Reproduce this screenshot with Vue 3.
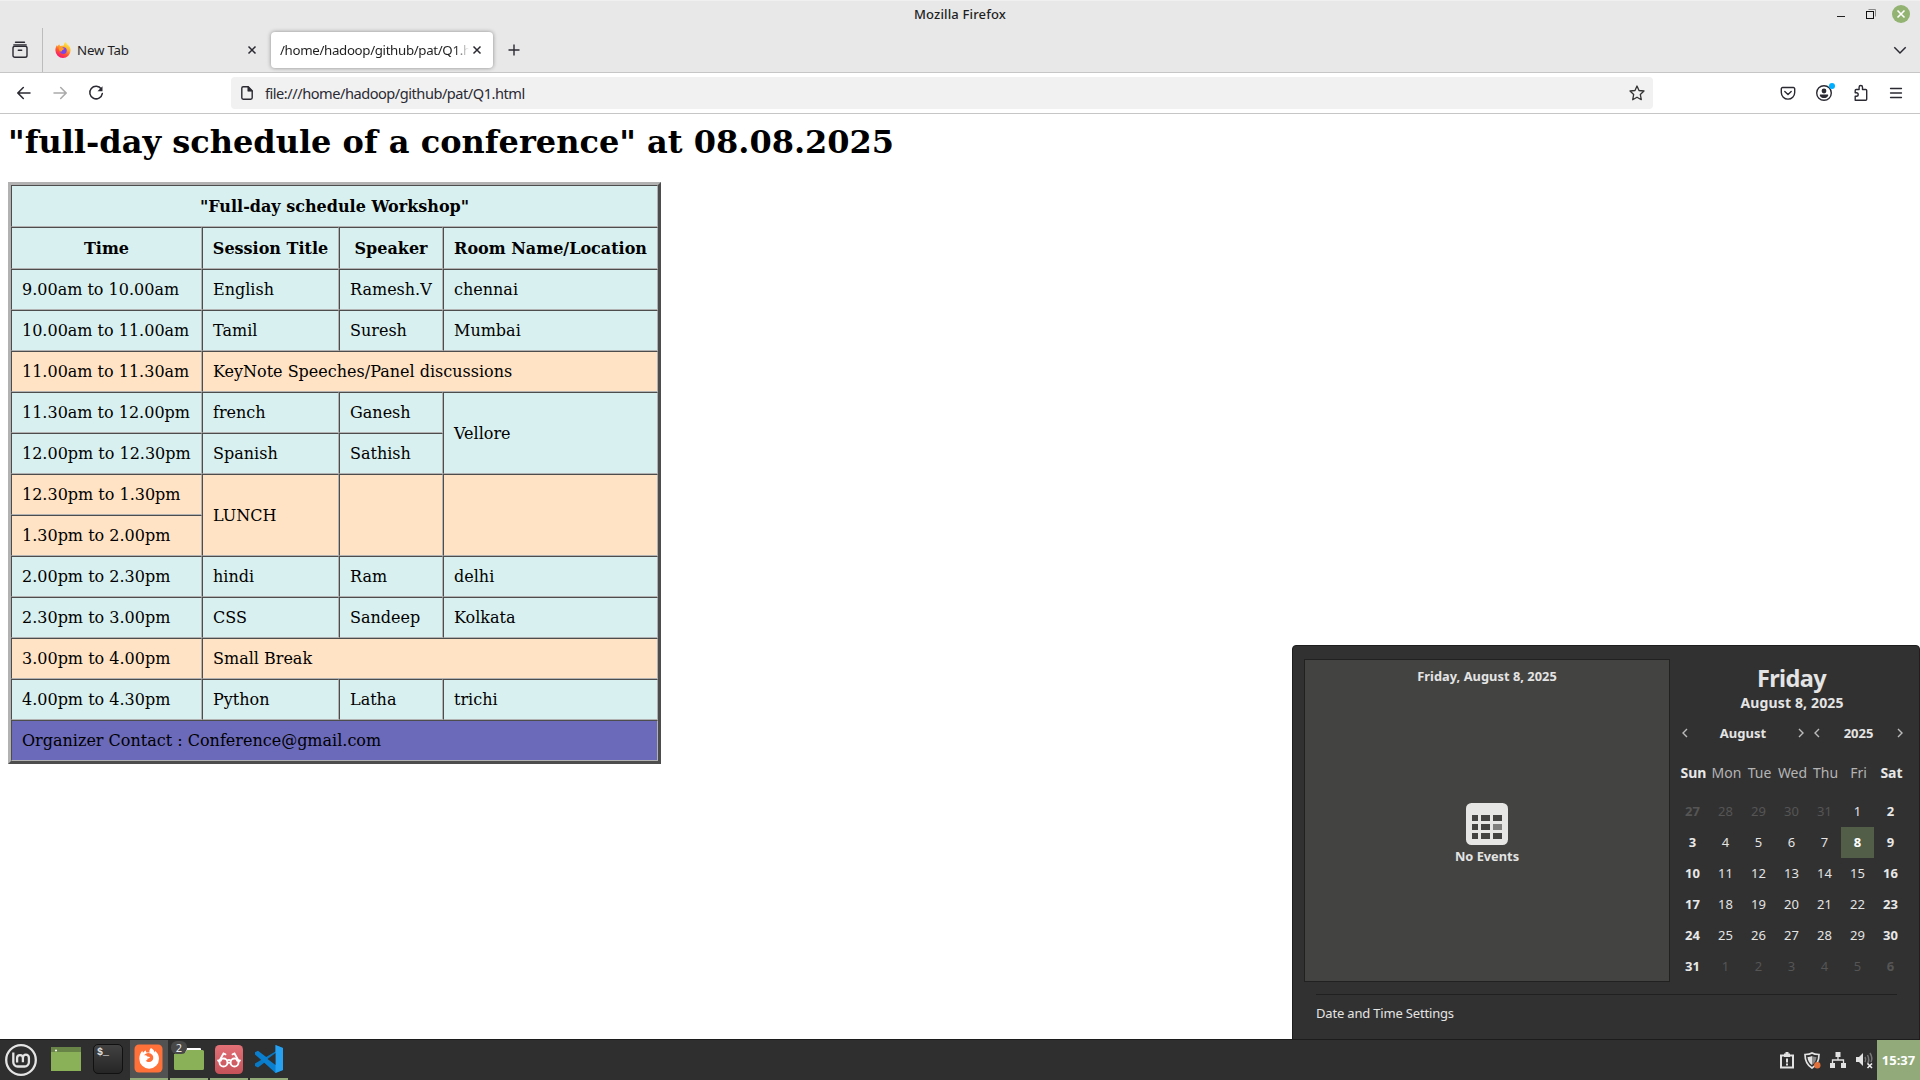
<script setup>
const rows = [
  { tone: 'mint', cells: [['9.00am to 10.00am'], ['English'], ['Ramesh.V'], ['chennai']] },
  { tone: 'mint', cells: [['10.00am to 11.00am'], ['Tamil'], ['Suresh'], ['Mumbai']] },
  { tone: 'peach', cells: [['11.00am to 11.30am'], ['KeyNote Speeches/Panel discussions', 3]] },
  { tone: 'mint', cells: [['11.30am to 12.00pm'], ['french'], ['Ganesh'], ['Vellore', 1, 2]] },
  { tone: 'mint', cells: [['12.00pm to 12.30pm'], ['Spanish'], ['Sathish']] },
  { tone: 'peach', cells: [['12.30pm to 1.30pm'], ['LUNCH', 1, 2], ['', 1, 2], ['', 1, 2]] },
  { tone: 'peach', cells: [['1.30pm to 2.00pm']] },
  { tone: 'mint', cells: [['2.00pm to 2.30pm'], ['hindi'], ['Ram'], ['delhi']] },
  { tone: 'mint', cells: [['2.30pm to 3.00pm'], ['CSS'], ['Sandeep'], ['Kolkata']] },
  { tone: 'peach', cells: [['3.00pm to 4.00pm'], ['Small Break', 3]] },
  { tone: 'mint', cells: [['4.00pm to 4.30pm'], ['Python'], ['Latha'], ['trichi']] },
  { tone: 'violet', cells: [['Organizer Contact : Conference@gmail.com', 4]] },
]
const weekdays = ['Sun', 'Mon', 'Tue', 'Wed', 'Thu', 'Fri', 'Sat']
// The grid starts on July 27 and covers six weeks.
const days = Array.from({ length: 42 }, (_, i) => {
  const n = i - 4
  const outside = n < 1 || n > 31
  return {
    label: n < 1 ? n + 31 : n > 31 ? n - 31 : n,
    outside,
    weekend: i % 7 === 0 || i % 7 === 6,
    today: n === 8,
  }
})
</script>

<template>
  <div class="desktop">
    <header class="titlebar">
      <span class="title">Mozilla Firefox</span>
      <div class="winbtns">
        <svg width="100" height="28" viewBox="0 0 100 28">
          <path d="M17 16.500h8" stroke="#222" />
          <path d="M48.500 9.500h7v7" fill="none" stroke="#888" />
          <rect x="46.500" y="11.500" width="7" height="7" fill="none" stroke="#111" />
          <circle cx="81" cy="14" r="9" fill="#92b372" />
          <path d="M77.500 10.500l7 7M84.500 10.500l-7 7" stroke="#fff" stroke-width="1.600" />
        </svg>
      </div>
    </header>

    <div class="tabs">
      <div class="view">
        <svg width="16" height="18" viewBox="0 0 16 18" fill="none" stroke="#2b2a33" stroke-width="1.400" stroke-linecap="round">
          <path d="M3.500 1.200h9M1.800 3.900h12.400" />
          <rect x="1" y="5.200" width="14" height="11" rx="1.800" />
          <path d="M6.300 9.300h3.400" />
        </svg>
      </div>
      <div class="tab first">
        <svg class="ff" width="16" height="16" viewBox="0 0 16 16">
          <defs>
            <linearGradient id="flame" x1=".8" y1="0" x2=".25" y2="1">
              <stop offset="0" stop-color="#fff44f" /><stop offset=".35" stop-color="#ffb52e" />
              <stop offset=".65" stop-color="#ff5634" /><stop offset="1" stop-color="#f50a7b" />
            </linearGradient>
          </defs>
          <path d="M10.500 0c1 .8 1.500 1.700 1.700 2.600 2.200 1.300 3.400 3.300 3.400 5.700a7.500 7.500 0 0 1-15.200 0c0-2 .6-3.800 1.700-5.200L2.300 4.500 4.200 2.300 5.100 4l3.700-.6c.2-1.400.8-2.600 1.700-3.400z" fill="url(#flame)" />
          <circle cx="8.300" cy="8.600" r="3.400" fill="#7a46e8" />
          <path d="M3.800 5.200c2-.8 3.400 0 4.300 1l1.200.2c-.2 1-1 1.400-2.200 1.600.4 1.200-.8 1.600-1.800 1.500C4 8.500 3.500 6.800 3.800 5.200z" fill="#ff9a2a" />
        </svg>
        <span class="lbl newtab">New Tab</span>
        <svg class="x" width="10" height="10" viewBox="0 0 10 10"><path d="M1.500 1.500l7 7M8.500 1.500l-7 7" stroke="#2b2a33" stroke-width="1.500" /></svg>
      </div>
      <div class="tab active">
        <span class="lbl path">/home/hadoop/github/pat/Q1.html</span>
        <svg class="x" width="10" height="10" viewBox="0 0 10 10"><path d="M1.500 1.500l7 7M8.500 1.500l-7 7" stroke="#2b2a33" stroke-width="1.500" /></svg>
      </div>
      <svg class="plus" width="12" height="12" viewBox="0 0 12 12"><path d="M6 .5v11M.5 6h11" stroke="#2b2a33" stroke-width="1.400" /></svg>
      <svg class="more" width="14" height="9" viewBox="0 0 14 9"><path d="M1.300 1.300L7 7l5.700-5.700" fill="none" stroke="#2b2a33" stroke-width="1.500" /></svg>
    </div>

    <div class="toolbar">
      <div class="nav">
        <svg width="14" height="14" viewBox="0 0 14 14" fill="none" stroke="#2b2a33" stroke-width="1.500" stroke-linecap="round"><path d="M6.300 1.500L.9 7l5.400 5.500M1 7h12" /></svg>
        <svg width="14" height="14" viewBox="0 0 14 14" fill="none" stroke="#aaa" stroke-width="1.500" stroke-linecap="round"><path d="M7.700 1.500L13.100 7l-5.400 5.500M13 7H1" /></svg>
        <svg class="reload" width="16" height="16" viewBox="0 0 16 16"><path d="M13.300 4A6.300 6.300 0 1 0 14.300 8.600" fill="none" stroke="#2b2a33" stroke-width="1.500" stroke-linecap="round" /><path d="M14.500 1.200v4.600a.5.500 0 0 1-.5.500H9.500z" fill="#2b2a33" /></svg>
      </div>
      <div class="urlbar">
        <svg width="12" height="14" viewBox="0 0 12 14"><path d="M2.200.8h5l4 4v7a1.400 1.400 0 0 1-1.400 1.400H2.200A1.400 1.400 0 0 1 .8 11.800V2.200A1.400 1.400 0 0 1 2.200.8z" fill="none" stroke="#2b2a33" stroke-width="1.400" /><path d="M6.800.5v4.700h4.700z" fill="#2b2a33" stroke="#2b2a33" stroke-width=".6" /></svg>
        <span class="url">file:///home/hadoop/github/pat/Q1.html</span>
        <svg width="16" height="16" viewBox="0 0 16 16"><path d="M8 1l2 4.500 5 .5-3.700 3.400 1 5.300L8 12.200l-4.300 2.500 1-5.300L1 6l5-.5z" fill="none" stroke="#333" stroke-width="1.300" stroke-linejoin="round" /></svg>
      </div>
      <div class="tools">
        <svg width="16" height="16" viewBox="0 0 16 16" fill="none" stroke="#2b2a33" stroke-width="1.400" stroke-linecap="round" stroke-linejoin="round"><path d="M2.600 2.500h10.800a1.300 1.300 0 0 1 1.300 1.300v3.600a6.700 6.700 0 0 1-13.400 0V3.800a1.300 1.300 0 0 1 1.300-1.300z" /><path d="M4.800 6.500L8 9.500l3.200-3" /></svg>
        <svg width="20" height="20" viewBox="0 0 20 20"><circle cx="9" cy="10" r="7.300" fill="none" stroke="#2b2a33" stroke-width="1.400" /><circle cx="9" cy="8" r="2.400" fill="#2b2a33" /><path d="M5.500 11.500h7c.7 0 .8.6.6 1.200-.6 1.500-2.200 2.300-4.100 2.300s-3.500-.8-4.100-2.300c-.2-.6-.1-1.200.6-1.200z" fill="#2b2a33" /><circle cx="17" cy="3" r="3" fill="#00aeff" /></svg>
        <svg width="16" height="18" viewBox="0 0 16 18"><path d="M1.200 16.300h10.500a1 1 0 0 0 1-1V6.500a1 1 0 0 0-1-1H8.500V3.200a1.700 1.700 0 0 0-3.400 0v2.300H2.200a1 1 0 0 0-1 1V8.700h1.200a1.700 1.700 0 0 1 0 3.600H1.200z" fill="none" stroke="#2b2a33" stroke-width="1.400" stroke-linejoin="round" /></svg>
        <svg width="14" height="12" viewBox="0 0 14 12"><path d="M1.500 1.500h11M1.500 6h11M1.500 10.500h11" stroke="#2b2a33" stroke-width="1.300" stroke-linecap="round" /></svg>
      </div>
    </div>

    <main class="page">
      <h1>"full-day schedule of a conference" at 08.08.2025</h1>
      <table>
        <colgroup><col class="c1" /><col class="c2" /><col class="c3" /><col class="c4" /></colgroup>
        <tbody>
          <tr class="mint head"><th colspan="4">"Full-day schedule Workshop"</th></tr>
          <tr class="mint head"><th>Time</th><th>Session Title</th><th>Speaker</th><th>Room Name/Location</th></tr>
          <tr v-for="(r, i) in rows" :key="i" :class="r.tone">
            <td v-for="(c, j) in r.cells" :key="j" :colspan="c[1] || 1" :rowspan="c[2] || 1">{{ c[0] }}</td>
          </tr>
        </tbody>
      </table>
    </main>

    <section class="popup">
      <div class="upper">
        <div class="events">
          <span class="evdate">Friday, August 8, 2025</span>
          <div class="none">
            <svg width="42" height="42" viewBox="0 0 42 42">
              <rect width="42" height="42" rx="5.500" fill="#e6e6e4" />
              <path d="M6 12h6v6H6zM15 12h9v6h-9zM27 12h9v6h-9zM6 21h6v6H6zM15 21h9v6h-9zM6 30h6v6H6zM15 30h9v6h-9zM27 30h9v6h-9z" fill="#434341" />
              <path d="M27 21h9v6h-9z" fill="#7f7f7d" />
            </svg>
            <span>No Events</span>
          </div>
        </div>
        <div class="cal">
          <div class="dow">Friday</div>
          <div class="full">August 8, 2025</div>
          <div class="switch">
            <svg width="6" height="10" viewBox="0 0 6 10"><path d="M5 1L1 5l4 4" /></svg>
            <span class="m">August</span>
            <svg width="6" height="10" viewBox="0 0 6 10"><path d="M1 1l4 4-4 4" /></svg>
            <svg class="gap" width="6" height="10" viewBox="0 0 6 10"><path d="M5 1L1 5l4 4" /></svg>
            <span class="y">2025</span>
            <svg width="6" height="10" viewBox="0 0 6 10"><path d="M1 1l4 4-4 4" /></svg>
          </div>
          <div class="grid names">
            <span v-for="(d, i) in weekdays" :key="d" :class="{ weekend: i === 0 || i === 6 }">{{ d }}</span>
          </div>
          <div class="grid dates">
            <span v-for="(d, i) in days" :key="i" :class="{ weekend: d.weekend, outside: d.outside, today: d.today }">{{ d.label }}</span>
          </div>
        </div>
      </div>
      <div class="settings"><span>Date and Time Settings</span></div>
    </section>

    <footer class="panel">
      <svg class="mint-logo" width="32" height="32" viewBox="0 0 32 32" fill="none" stroke="#e4e4e4">
        <circle cx="16" cy="16" r="14.800" stroke-width="2.300" />
        <path d="M8.300 8.500v9.700a4.300 4.300 0 0 0 4.300 4.300h7a4.300 4.300 0 0 0 4.300-4.300v-4.500a3 3 0 0 0-6 0v4.600M17.900 14a2.900 2.900 0 0 0-5.800 0v4.600" stroke-width="2.300" />
      </svg>
      <div class="launchers">
        <div class="app plain">
          <svg width="30" height="24" viewBox="0 0 30 24"><path d="M0 0h30v24H0z" fill="#8bb158" /><path d="M0 0h30v5H0z" fill="#688446" /><circle cx="5" cy="3.500" r="1" fill="#fff" /></svg>
        </div>
        <div class="app plain term">
          <svg width="30" height="30" viewBox="0 0 30 30"><defs><linearGradient id="tm" x1="0" y1="0" x2="0" y2="1"><stop offset="0" stop-color="#424242" /><stop offset="1" stop-color="#252525" /></linearGradient></defs><rect x=".5" y=".5" width="29" height="29" rx="4.500" fill="url(#tm)" stroke="#111" /><text x="4" y="11" font-size="10" font-weight="700" font-family="'Liberation Mono', monospace" fill="#e4e4e4">$_</text></svg>
        </div>
        <div class="app on focus">
          <svg width="30" height="30" viewBox="0 0 30 30"><rect x=".5" y=".5" width="28" height="28" rx="4.500" fill="#ff7139" /><path d="M17 4c2.200 1 3.300 2.800 3.600 4.500.4-.5.500-1.100.4-1.700 2.700 2 4 4.700 4 8a9.800 9.800 0 0 1-19.700 0c0-3.200 1-5.800 3-8l.7 2 2.500-2.600.9 2.400c1.100-.3 2.100-.2 3.100.1-.3-1.800.2-3.600 1.500-4.700z" fill="#fff" /><path d="M10 11.500c1.400-.6 2.600 0 3.300 1l2.700.4c-.3 1.100-1.400 1.500-2.500 1.600.2 1.300-.7 2-1.700 1.900.7 1 1.800 1.600 3.200 1.600 2.400 0 4.300-1.700 4.300-4 0-1.100-.3-2.100-.9-2.900-1-1.300-2.500-1.900-4-2-1.700-.1-3.400.9-4.400 2.400z" fill="#ff7139" /></svg>
        </div>
        <div class="app on files">
          <svg width="30" height="24" viewBox="0 0 30 24"><path d="M1 7V2a2 2 0 0 1 2-2h7l3 3h14v5z" fill="#6c8b45" /><path d="M11 1h15a1 1 0 0 1 1 1v4H11z" fill="#fff" /><path d="M0 7h10l3-4h15.500A1.500 1.500 0 0 1 30 4.500v17a1.500 1.500 0 0 1-1.500 1.500h-27A1.500 1.500 0 0 1 0 21.500z" fill="#8bb158" /></svg>
          <span class="badge">2</span>
        </div>
        <div class="app on">
          <svg width="28" height="29" viewBox="0 0 28 29"><defs><linearGradient id="rd" x1="0" y1="0" x2="0" y2="1"><stop offset="0" stop-color="#e27077" /><stop offset="1" stop-color="#c55258" /></linearGradient></defs><rect width="28" height="29" rx="4.500" fill="url(#rd)" /><g fill="none" stroke="#fff" stroke-width="1.800" stroke-linecap="round"><circle cx="8.500" cy="17.500" r="4" /><circle cx="19.500" cy="17.500" r="4" /><path d="M12 15.500q2-1.200 4 0M12.500 18q1.500-.9 3 0M4 16.500L8.500 8.500l2 .8M24 16.500l-4.500-8-2 .8M3 15.500h3M25 15.500h-3" /></g></svg>
        </div>
        <div class="app on">
          <svg width="28" height="28" viewBox="0 0 28 28"><path d="M20.500 0L28 3v22l-7.500 3L9.500 17.500 3 22.500 0 21V18.500l20.500-12z" fill="#0879c4" /><path d="M0 9.500V7.200L3 5.700 21 19.500V28z" fill="#0a7fcf" /><path d="M20.500 0L28 3v22l-7.500 3z" fill="#26a0f0" /><path d="M20.500 8v12L12.500 14z" fill="#303030" /></svg>
        </div>
      </div>
      <div class="tray">
        <svg width="14" height="17" viewBox="0 0 14 17"><path d="M1 3.500h12v12H1z" fill="none" stroke="#e2e2e2" stroke-width="2" /><path d="M4 1.500h1.500V0h3v1.500H10V5H4z" fill="#e2e2e2" /><path d="M6 6.500h2v4H6zM6 11.500h2v2H6z" fill="#e2e2e2" /></svg>
        <svg width="17" height="17" viewBox="0 0 17 17"><path d="M8 1c2 1.300 4.500 1.500 7 1.500 0 6-2 10.500-7 13.500C3 13 1 8.500 1 2.500 3.500 2.500 6 2.300 8 1z" fill="none" stroke="#e2e2e2" stroke-width="1.700" /><path d="M8 4c-1.500.8-3 1-4.500 1 .3 3.500 1.500 6 4.500 8z" fill="#e2e2e2" /><path d="M8 4c1.500.8 3 1 4.500 1-.3 3.500-1.500 6-4.500 8z" fill="#8a8a8a" /><circle cx="13.300" cy="13.300" r="3.200" fill="#e0713c" /></svg>
        <svg width="16" height="16" viewBox="0 0 16 16"><path d="M5.500 0h5v5h-5zM0 11h5v5H0zM11 11h5v5h-5z" fill="#e2e2e2" /><path d="M8 5v3M2.500 11V8h11v3" fill="none" stroke="#e2e2e2" stroke-width="1.300" /></svg>
        <svg width="18" height="17" viewBox="0 0 18 17"><path d="M0 5h3l4-4v13l-4-4H0z" fill="#e2e2e2" /><path d="M9 5q1.500 2.500 0 5M11.500 3q2.500 4.500 0 9M14 1q3 5 1 9" fill="none" stroke="#777" stroke-width="1.500" /><path d="M11.500 11.500l4.500 4.500M16 11.500L11.500 16" stroke="#eee" stroke-width="1.600" /></svg>
      </div>
      <div class="clock"><span>15:37</span></div>
    </footer>
  </div>
</template>

<style>
body { background: #fff; overflow: hidden; }
</style>

<style scoped>
* { box-sizing: border-box; }
svg { display: block; flex: none; }
.desktop {
  position: relative; width: 1920px; height: 1080px; overflow: hidden;
  display: flex; flex-direction: column; background: #fff;
  font-family: "Noto Sans", "Open Sans", sans-serif; color: #1f1f1f; white-space: nowrap;
}
.titlebar { height: 28px; flex: none; background: #e8e8e8; border-top: 1px solid #f0f0f0; display: flex; align-items: center; }
.title { flex: 1; padding: 0 0 2px 100px; text-align: center; font-size: 13px; font-weight: 500; letter-spacing: .15px; }
.winbtns { width: 100px; margin-top: -1px; }
.tabs { height: 45px; flex: none; background: #e8e8e8; border-bottom: 1px solid #c6c6c6; display: flex; align-items: center; }
.view { width: 43px; height: 44px; flex: none; border-right: 1px solid #bcbcbc; padding: 13px 0 0 12px; }
.tab { display: flex; flex: none; align-items: center; width: 222px; height: 36px; margin-left: 4px; padding: 0 11px 0 9px; border-radius: 4px; }
.tab.first { width: 220px; margin-left: 5px; padding-left: 7px; }
.tab.active { margin-left: 3px; background: #fff; box-shadow: 0 0 4px rgba(0, 0, 0, .4); }
.ff { margin-right: 6px; }
.lbl { flex: 1; min-width: 0; font-size: 13.3px; overflow: hidden; }
.path { mask-image: linear-gradient(to left, transparent 0, #000 14px); letter-spacing: -.34px; margin-right: 3px; }
.newtab { letter-spacing: -.2px; }
.plus { margin-left: 15px; }
.more { margin-left: auto; margin-right: 13px; }
.toolbar { height: 41px; flex: none; background: #fff; border-bottom: 1px solid #c6c6c6; display: flex; align-items: center; }
.nav { width: 231px; flex: none; display: flex; align-items: center; gap: 22px; padding-left: 17px; }
.reload { margin-left: -1px; }
.urlbar { width: 1422px; flex: none; height: 32px; border-radius: 4px; background: #f1f1f1; display: flex; align-items: center; padding: 0 8px 0 10px; }
.url { flex: 1; margin-left: 12px; font-size: 14.6px; letter-spacing: -.48px; color: #2b2a33; }
.tools { flex: 1; padding: 0 17px 0 127px; display: flex; align-items: center; justify-content: space-between; }

.page { flex: 1; min-height: 0; padding: 9px 8px 8px; font-family: "DejaVu Serif", serif; font-size: 16px; color: #000; }
h1 { margin: 0 0 21px; font-size: 32px; line-height: 38px; font-weight: 700; }
table { width: 653px; table-layout: fixed; border-collapse: separate; border-spacing: 0; border: 3px solid; border-color: #b2b2b2 #4d4d4d #4d4d4d #b2b2b2; }
.c1 { width: 191px; } .c2 { width: 137px; } .c3 { width: 104px; } .c4 { width: 215px; }
td, th { height: 41px; padding: 0 10px; line-height: 19px; border: 1px solid; border-color: #4d4d4d #b2b2b2 #b2b2b2 #4d4d4d; text-align: left; vertical-align: middle; }
th { height: 42px; padding: 0; text-align: center; }
.mint { background: #d8f0ef; }
.peach { background: #ffe3c4; }
.violet { background: #6a69ba; }

.popup { position: absolute; left: 1292px; top: 645px; width: 628px; height: 395px; background: #313131; border: 1px solid #1e1e1e; border-radius: 4px 4px 0 0; color: #e4e4e4; font-size: 13px; }
.upper { display: flex; padding: 13px 0 0 11px; height: 348px; }
.events { width: 366px; height: 323px; background: #434341; border: 1px solid #212121; display: flex; flex-direction: column; align-items: center; font-weight: 700; font-size: 12.8px; }
.evdate { margin-top: 7px; line-height: 18px; letter-spacing: .05px; }
.none { margin-top: 118px; display: flex; flex-direction: column; align-items: center; }
.none span { line-height: 18px; margin-top: 2px; }
.cal { width: 231px; margin-left: 7px; text-align: center; }
.dow { font-size: 23.5px; font-weight: 700; line-height: 32px; margin: 3px 2px 0 0; letter-spacing: -.6px; }
.full { font-size: 14px; font-weight: 700; line-height: 18px; margin-right: 1px; letter-spacing: .15px; }
.switch { display: flex; align-items: center; height: 18px; margin: 12px 0 0 5px; font-weight: 700; }
.switch svg { fill: none; stroke: #bbb; stroke-width: 1.4; }
.m { width: 110px; } .y { width: 77px; }
.gap { margin-left: 10px; }
.grid { display: grid; grid-template-columns: repeat(7, 33px); grid-auto-rows: 31px; line-height: 31px; }
.names { margin: 15px 0 8px; font-size: 14px; color: #b4b4b4; }
.dates { margin-left: -1px; }
.weekend { font-weight: 700; color: #e8e8e8; }
.outside { color: #555; }
.today { background: #525e48; font-weight: 700; color: #fff; }
.settings { margin: 0 22px 0 23px; border-top: 1px solid #202020; padding-top: 8px; line-height: 20px; letter-spacing: -.18px; }

.panel { position: relative; height: 41px; flex: none; background: #2f2f2f; border-top: 1px solid #1c1c1c; display: flex; align-items: center; }
.mint-logo { margin-left: 5px; }
.launchers { display: flex; gap: 2px; margin-left: 9px; height: 40px; }
.app { position: relative; width: 38px; display: flex; align-items: center; justify-content: center; border-bottom: 2px solid transparent; }
.app.plain { width: 40px; }
.app.on { border-bottom-color: #92a978; }
.focus { background: #525252; background-clip: padding-box; }
.badge { position: absolute; left: 1px; top: 1px; width: 16px; height: 13px; border-radius: 6px; background: #484848; color: #e8e8e8; font-size: 11px; line-height: 13px; text-align: center; }
.tray { margin-left: auto; width: 97px; display: flex; align-items: center; justify-content: space-between; padding-right: 3px; }
.clock { width: 43px; height: 40px; background: #92aa79; color: #fff; font-weight: 700; font-size: 13px; line-height: 41px; text-align: center; }
</style>
